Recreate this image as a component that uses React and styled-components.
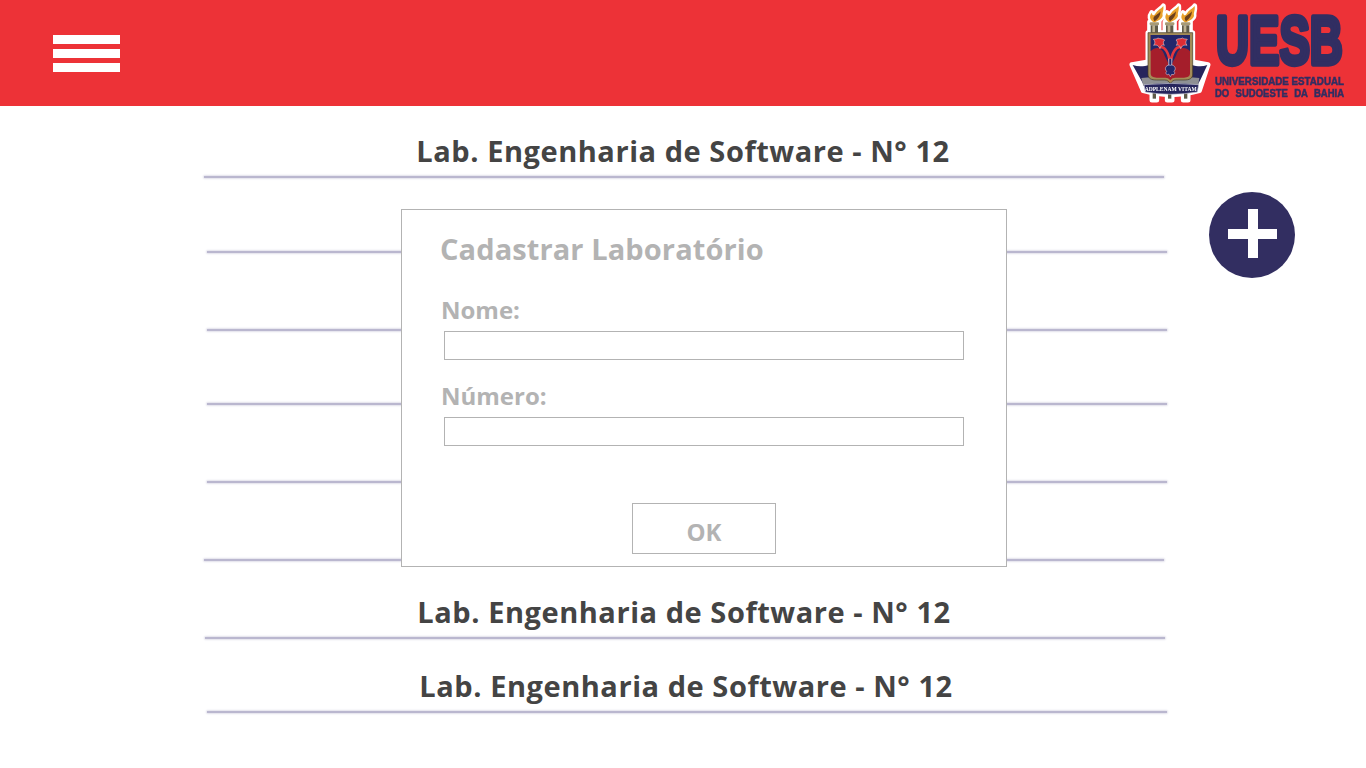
import React from "react";
import styled, { createGlobalStyle } from "styled-components";

const Global = createGlobalStyle`
  html, body { margin: 0; padding: 0; background: #fff; }
  body { font-family: "Open Sans", "Noto Sans", "Liberation Sans", sans-serif; overflow: hidden; }
`;

const Page = styled.div`
  position: relative;
  width: 1366px;
  height: 768px;
  overflow: hidden;
  background: #fff;
`;

const Header = styled.header`
  height: 106px;
  background: #ed3237;
  display: flex;
  align-items: center;
  justify-content: space-between;
  padding: 0 0 0 53px;
`;

const Burger = styled.button`
  width: 67px;
  height: 37px;
  padding: 0;
  border: 0;
  background: transparent;
  display: flex;
  flex-direction: column;
  justify-content: space-between;
`;

const BurgerBar = styled.span`
  display: block;
  height: 9px;
  background: #fff;
`;

const LogoSvg = styled.svg`
  display: block;
  width: 246px;
  height: 106px;
  flex: none;
  filter: blur(0.35px);
`;

const List = styled.main`
  display: flex;
  flex-direction: column;
`;

const Row = styled.div`
  width: 960px;
  height: ${(p) => p.$height}px;
  margin-left: ${(p) => p.$left}px;
  display: flex;
  flex-direction: column;
  justify-content: flex-end;
  align-items: center;
`;

const RowTitle = styled.h2`
  margin: 0 2px 6px 0;
  font-size: 29px;
  letter-spacing: 0.55px;
  line-height: 38px;
  font-weight: 700;
  color: #444;
  white-space: nowrap;
`;

const Rule = styled.div`
  width: 100%;
  height: 2px;
  flex: none;
  background: #bab7cf;
  box-shadow: 0 0 2px 0.5px #d2d0e0;
`;

const Fab = styled.button`
  position: absolute;
  left: 1209px;
  top: 192px;
  width: 86px;
  height: 86px;
  padding: 0;
  border: 0;
  border-radius: 50%;
  background: #322e61;
  &::before, &::after {
    content: "";
    position: absolute;
    background: #fff;
  }
  &::before { left: 19px; top: 37px; width: 49px; height: 10px; }
  &::after { left: 39px; top: 17px; width: 10px; height: 49px; }
`;

const Modal = styled.section`
  position: absolute;
  left: 401px;
  top: 209px;
  width: 606px;
  height: 358px;
  background: #fff;
  border: 1px solid #b3b3b3;
  padding: 19px 0 0 38px;
  box-sizing: border-box;
  display: flex;
  flex-direction: column;
`;

const ModalTitle = styled.h1`
  margin: 0 0 26px;
  height: 40px;
  font-size: 29px;
  letter-spacing: 0.1px;
  line-height: 40px;
  font-weight: 700;
  color: #b3b3b3;
  white-space: nowrap;
`;

const Field = styled.label`
  display: flex;
  flex-direction: column;
  margin-bottom: 21px;
`;

const FieldLabel = styled.span`
  margin-left: 1px;
  font-size: 24px;
  line-height: 30px;
  height: 36px;
  font-weight: 700;
  color: #b3b3b3;
`;

const TextInput = styled.input`
  width: 520px;
  height: 29px;
  margin: 0 0 0 4px;
  padding: 0;
  box-sizing: border-box;
  border: 1px solid #b3b3b3;
  background: #fff;
  outline: none;
`;

const ModalActions = styled.div`
  display: flex;
  margin-top: 36px;
  padding-left: 192px;
`;

const OkButton = styled.button`
  width: 144px;
  height: 51px;
  padding: 6px 0 0;
  box-sizing: border-box;
  border: 1px solid #b3b3b3;
  background: #fff;
  font-family: inherit;
  font-size: 24px;
  font-weight: 700;
  color: #b3b3b3;
`;

function Logo() {
  const crest =
    "M84 98 H218 V222 C218 236 208 240 192 240 H168 C160 240 156 244 151 250 C146 244 142 240 134 240 H110 C94 240 84 236 84 222 Z";
  const inner =
    "M92 105 H210 V220 C210 229 203 233 192 233 H166 C160 233 155 235 151 241 C147 235 142 233 136 233 H110 C99 233 92 229 92 220 Z";
  const flame = (x) =>
    `M${x} 68 C${x - 16} 58 ${x - 15} 48 ${x - 8} 38 C${x - 6} 48 ${x} 48 ${x + 4} 40 C${x + 9} 30 ${x + 20} 27 ${x + 27} 18 C${x + 29} 32 ${x + 23} 38 ${x + 25} 46 C${x + 25} 56 ${x + 12} 62 ${x} 68 Z`;
  const torchX = [103, 149, 197];
  return (
    <LogoSvg viewBox="0 0 738 318" aria-label="UESB">
      <g fill="#fff" stroke="#fff" strokeWidth="15" strokeLinejoin="round">
        {torchX.map((x) => (
          <path key={x} d={flame(x)} />
        ))}
        {torchX.map((x) => (
          <rect key={x} x={x - 14} y="66" width="28" height="36" />
        ))}
        <path d={crest} />
        <path d="M36 194 L84 186 L218 186 L264 194 L238 272 Q153 296 70 272 Z" />
        {torchX.map((x) => (
          <rect key={x} x={x - 7} y="270" width="14" height="30" />
        ))}
      </g>
      {torchX.map((x) => (
        <g key={x}>
          <path d={flame(x)} fill="#e9a02a" />
          <path
            d={`M${x + 1} 64 C${x - 6} 56 ${x - 2} 50 ${x + 5} 46 C${x + 10} 42 ${x + 14} 40 ${x + 19} 34 C${x + 18} 48 ${x + 12} 56 ${x + 1} 64 Z`}
            fill="#6b3f1c"
          />
          <rect x={x - 14} y="67" width="28" height="9" rx="3" fill="#a79a76" />
          <rect x={x - 11} y="76" width="22" height="22" fill="#5f5a48" />
          <rect x={x - 6} y="76" width="8" height="22" fill="#bdb290" />
        </g>
      ))}
      {/* ribbon wings */}
      <path d="M38 195 C54 200 72 200 88 194 L88 240 L74 260 L62 238 Z" fill="#26255c" />
      <path d="M262 195 C248 200 232 200 214 194 L214 240 L230 260 L242 238 Z" fill="#26255c" />
      {/* grey band under the shield */}
      <path d="M64 234 Q152 224 238 234 L234 258 L70 258 Z" fill="#8e9094" />
      {torchX.map((x) => (
        <rect key={x} x={x - 5} y="276" width="10" height="20" fill="#5f5a48" />
      ))}
      {/* shield */}
      <path d={crest} fill="#a38c58" stroke="#3f3620" strokeWidth="2" />
      <path d={inner} fill="#a51e2b" />
      <path
        d="M92 105 H210 V154 C194 136 176 144 170 162 C165 176 157 184 155 200 H147 C145 184 137 176 132 162 C126 144 108 136 92 154 Z"
        fill="#22276b"
      />
      <path
        d="M116 142 C136 136 146 160 151 190 C156 160 166 136 186 142"
        fill="none"
        stroke="#e3383f"
        strokeWidth="8"
      />
      <path d="M151 176 V212" stroke="#f0eff6" strokeWidth="11" />
      <path d="M151 176 V212" stroke="#22276b" strokeWidth="7" />
      <path
        d="M151 196 C160 192 172 204 162 214 C168 220 160 228 156 222 C154 226 152 228 151 230 C150 228 148 226 146 222 C142 228 134 220 140 214 C130 204 142 192 151 196 Z"
        fill="#22276b"
        stroke="#f0eff6"
        strokeWidth="1.5"
      />
      <path
        d="M114 114 C120 118 127 114 134 120 C129 124 129 130 133 136 C125 133 122 138 120 146 C116 136 110 134 101 136 C106 130 106 123 100 118 C106 116 110 118 114 114 Z"
        fill="#dd2c34"
        stroke="#f4e9e9"
        strokeWidth="1.5"
      />
      <path
        d="M188 114 C182 118 175 114 168 120 C173 124 173 130 169 136 C177 133 180 138 182 146 C186 136 192 134 201 136 C196 130 196 123 202 118 C196 116 192 118 188 114 Z"
        fill="#dd2c34"
        stroke="#f4e9e9"
        strokeWidth="1.5"
      />
      {/* banner */}
      <path
        d="M72 254 Q152 246 236 254 L232 276 Q152 290 76 276 Z"
        fill="#26255c"
        stroke="#c7c7d6"
        strokeWidth="2"
      />
      <text
        x="74"
        y="274"
        textLength="156"
        lengthAdjust="spacingAndGlyphs"
        fontFamily="'Liberation Serif', serif"
        fontWeight="700"
        fontSize="17"
        fill="#fff"
      >
        ADPLENAM VITAM
      </text>
      {/* wordmark */}
      <text
        transform="translate(288 192) scale(0.665 1)"
        fontFamily="'Liberation Sans', sans-serif"
        fontWeight="700"
        fontSize="206"
        fill="#312e62"
        stroke="#312e62"
        strokeWidth="16"
        strokeLinejoin="round"
      >
        UESB
      </text>
      <text
        x="285"
        y="256"
        textLength="387"
        lengthAdjust="spacingAndGlyphs"
        fontFamily="'Liberation Sans', sans-serif"
        fontWeight="700"
        fontSize="31"
        fill="#312e62"
        stroke="#312e62"
        strokeWidth="1.5"
      >
        UNIVERSIDADE ESTADUAL
      </text>
      <text
        x="285"
        y="292"
        textLength="387"
        lengthAdjust="spacingAndGlyphs"
        fontFamily="'Liberation Sans', sans-serif"
        fontWeight="700"
        fontSize="31"
        wordSpacing="12"
        fill="#312e62"
        stroke="#312e62"
        strokeWidth="1.5"
      >
        DO SUDOESTE DA BAHIA
      </text>
    </LogoSvg>
  );
}

const LABEL = "Lab. Engenharia de Software - N° 12";

const rows = [
  { id: 1, left: 204, height: 72, title: LABEL },
  { id: 2, left: 207, height: 75 },
  { id: 3, left: 207, height: 78 },
  { id: 4, left: 207, height: 74 },
  { id: 5, left: 207, height: 78 },
  { id: 6, left: 204, height: 78 },
  { id: 7, left: 205, height: 78, title: LABEL },
  { id: 8, left: 207, height: 74, title: LABEL },
];

export default function App() {
  return (
    <Page>
      <Global />
      <Header>
        <Burger aria-label="Menu">
          <BurgerBar />
          <BurgerBar />
          <BurgerBar />
        </Burger>
        <Logo />
      </Header>
      <List>
        {rows.map((r) => (
          <Row key={r.id} $left={r.left} $height={r.height}>
            {r.title && <RowTitle>{r.title}</RowTitle>}
            <Rule />
          </Row>
        ))}
      </List>
      <Fab aria-label="Adicionar" />
      <Modal>
        <ModalTitle>Cadastrar Laboratório</ModalTitle>
        <Field>
          <FieldLabel>Nome:</FieldLabel>
          <TextInput />
        </Field>
        <Field>
          <FieldLabel>Número:</FieldLabel>
          <TextInput />
        </Field>
        <ModalActions>
          <OkButton>OK</OkButton>
        </ModalActions>
      </Modal>
    </Page>
  );
}
